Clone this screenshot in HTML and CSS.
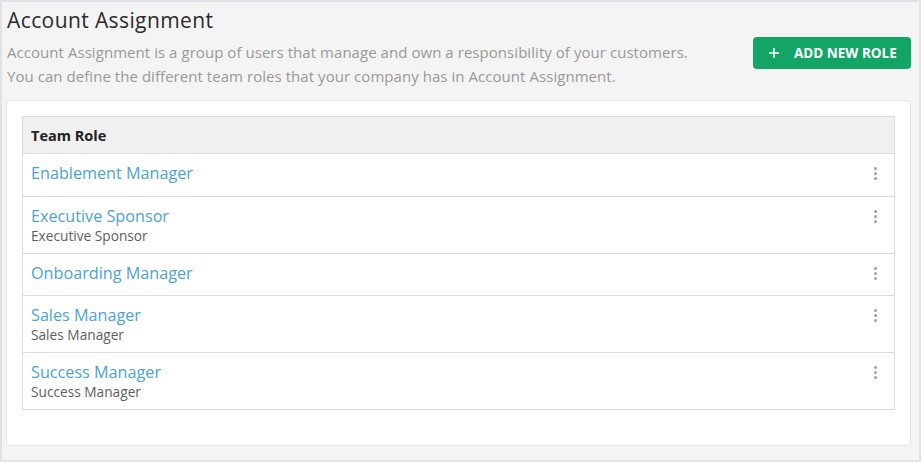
FILE: index.html
```html
<!DOCTYPE html>
<html>
<head>
<meta charset="utf-8">
<link rel="stylesheet" href="styles.css">
</head>
<body>
<div class="page">
  <div class="header">
    <div class="intro">
      <h1 class="title">Account Assignment</h1>
      <p class="desc">Account Assignment is a group of users that manage and own a responsibility of your customers.<br>You can define the different team roles that your company has in Account Assignment.</p>
    </div>
    <button class="add-btn">
      <svg class="plus" width="10" height="10" viewBox="0 0 10 10"><path d="M5 0V10M0 5H10" stroke="#fff" stroke-width="1.6"/></svg>
      <span>ADD NEW ROLE</span>
    </button>
  </div>
  <div class="card">
    <div class="table">
      <div class="thead">Team Role</div>
      <div class="row">
        <div class="cell"><a class="role">Enablement Manager</a></div>
        <span class="kebab"><i></i><i></i><i></i></span>
      </div>
      <div class="row">
        <div class="cell"><a class="role">Executive Sponsor</a><div class="sub">Executive Sponsor</div></div>
        <span class="kebab"><i></i><i></i><i></i></span>
      </div>
      <div class="row">
        <div class="cell"><a class="role">Onboarding Manager</a></div>
        <span class="kebab"><i></i><i></i><i></i></span>
      </div>
      <div class="row">
        <div class="cell"><a class="role">Sales Manager</a><div class="sub">Sales Manager</div></div>
        <span class="kebab"><i></i><i></i><i></i></span>
      </div>
      <div class="row">
        <div class="cell"><a class="role">Success Manager</a><div class="sub">Success Manager</div></div>
        <span class="kebab"><i></i><i></i><i></i></span>
      </div>
    </div>
  </div>
</div>
</body>
</html>
```

FILE: styles.css
```css
* { box-sizing: border-box; }
html, body { margin: 0; padding: 0; }
body {
  font-family: "Open Sans", "Liberation Sans", sans-serif;
  width: 921px;
  height: 462px;
  overflow: hidden;
}
.page {
  width: 921px;
  height: 462px;
  border: 2px solid #e0e2e5;
  background: #f4f4f4;
  padding: 4px 8px 0 4px;
}
.header {
  display: flex;
  justify-content: space-between;
  align-items: flex-start;
}
.intro { padding-left: 1px; }
.title {
  margin: 0;
  font-size: 21px;
  letter-spacing: 0.4px;
  font-weight: 400;
  color: #2b2b2b;
  line-height: 28px;
  height: 34px;
}
.desc {
  margin: 0;
  font-size: 15px;
  letter-spacing: 0.05px;
  line-height: 24px;
  color: #999;
}
.add-btn {
  margin-top: 31px;
  height: 32px;
  width: 158px;
  border: none;
  border-radius: 4px;
  background: #12a566;
  color: #fff;
  font-family: inherit;
  font-weight: 700;
  font-size: 13.5px;
  display: flex;
  align-items: center;
  padding: 0 0 0 16px;
  gap: 15px;
}
.card {
  margin-top: 12px;
  background: #fff;
  border: 1px solid #e6e6e6;
  border-radius: 3px;
  height: 346px;
  padding: 15px 15px 0 15px;
}
.table {
  border: 1px solid #dcdcdc;
  border-bottom: none;
}
.thead {
  height: 37px;
  background: #f0f0f0;
  border-bottom: 1px solid #dcdcdc;
  font-size: 14.5px;
  font-weight: 700;
  color: #222;
  padding: 0 8px;
  display: flex;
  align-items: center;
}
.row {
  display: flex;
  justify-content: space-between;
  align-items: flex-start;
  border-bottom: 1px solid #dcdcdc;
  padding: 8px 17px 0 8px;
  min-height: 42px;
}
.thead + .row { min-height: 43px; }
.row:has(.sub) { min-height: 57px; }
.role {
  display: block;
  font-size: 16.2px;
  line-height: 22px;
  color: #4aa3d2;
}
.sub {
  font-size: 13.7px;
  line-height: 18px;
  color: #5e5e5e;
}
.kebab {
  display: flex;
  flex-direction: column;
  gap: 2px;
  margin-top: 5px;
}
.kebab i {
  display: block;
  width: 3px;
  height: 3px;
  border-radius: 50%;
  background: #a0a0a0;
}
```
